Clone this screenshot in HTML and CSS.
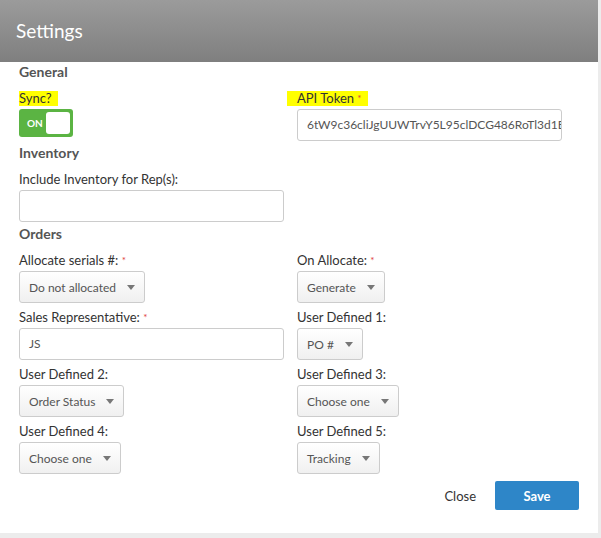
FILE: index.html
```html
<!DOCTYPE html>
<html lang="en">
<head>
    <meta charset="UTF-8">
    <meta name="viewport" content="width=device-width, initial-scale=1.0">
    <title>Settings</title>
    <link rel="stylesheet" href="styles.css">
</head>
<body>

    <div class="modal">
        <div class="modal-header">Settings</div>

        <div class="modal-body">
            <h3 class="section first">General</h3>
            <div class="grid">
                <div class="field">
                    <label><span class="mark mark-sync">Sync?</span></label>
                    <div class="toggle">
                        <span class="toggle-text">ON</span>
                        <span class="toggle-knob"></span>
                    </div>
                </div>
                <div class="field">
                    <label><span class="mark mark-api">API Token <span class="req">*</span></span></label>
                    <div class="input">6tW9c36cliJgUUWTrvY5L95clDCG486RoTl3d1E</div>
                </div>
            </div>

            <h3 class="section">Inventory</h3>
            <div class="grid">
                <div class="field">
                    <label>Include Inventory for Rep(s):</label>
                    <div class="input"></div>
                </div>
            </div>

            <h3 class="section">Orders</h3>
            <div class="grid">
                <div class="field">
                    <label>Allocate serials #: <span class="req">*</span></label>
                    <div class="select"><span>Do not allocated</span><svg class="caret" width="8" height="5" viewBox="0 0 8 5"><path d="M0 0H8L4 5Z"/></svg></div>
                </div>
                <div class="field">
                    <label>On Allocate: <span class="req">*</span></label>
                    <div class="select"><span>Generate</span><svg class="caret" width="8" height="5" viewBox="0 0 8 5"><path d="M0 0H8L4 5Z"/></svg></div>
                </div>
                <div class="field">
                    <label>Sales Representative: <span class="req">*</span></label>
                    <div class="input">JS</div>
                </div>
                <div class="field">
                    <label>User Defined 1:</label>
                    <div class="select"><span>PO #</span><svg class="caret" width="8" height="5" viewBox="0 0 8 5"><path d="M0 0H8L4 5Z"/></svg></div>
                </div>
                <div class="field">
                    <label>User Defined 2:</label>
                    <div class="select"><span>Order Status</span><svg class="caret" width="8" height="5" viewBox="0 0 8 5"><path d="M0 0H8L4 5Z"/></svg></div>
                </div>
                <div class="field">
                    <label>User Defined 3:</label>
                    <div class="select"><span>Choose one</span><svg class="caret" width="8" height="5" viewBox="0 0 8 5"><path d="M0 0H8L4 5Z"/></svg></div>
                </div>
                <div class="field">
                    <label>User Defined 4:</label>
                    <div class="select"><span>Choose one</span><svg class="caret" width="8" height="5" viewBox="0 0 8 5"><path d="M0 0H8L4 5Z"/></svg></div>
                </div>
                <div class="field">
                    <label>User Defined 5:</label>
                    <div class="select"><span>Tracking</span><svg class="caret" width="8" height="5" viewBox="0 0 8 5"><path d="M0 0H8L4 5Z"/></svg></div>
                </div>
            </div>
        </div>

        <div class="modal-footer">
            <button class="btn-link">Close</button>
            <button class="btn-save">Save</button>
        </div>
    </div>

</body>
</html>
```

FILE: styles.css
```css
body {
    margin: 0;
    background: #ececec;
    font-family: 'Lato', 'Liberation Sans', sans-serif;
    color: #333;
}

.modal {
    width: 598px;
    background: #fff;
    padding-bottom: 23px;
}

.modal-header {
    height: 62px;
    padding-left: 16px;
    background: linear-gradient(to bottom, #9b9b9b, #7f7f7f);
    color: #fff;
    font-size: 19px;
    line-height: 62px;
}

.modal-body {
    padding: 0 19px;
}

.section {
    margin: 3px 0 10px;
    font-size: 14px;
    line-height: 18px;
    font-weight: 700;
    color: #555;
}

.section.first {
    margin-top: 1px;
}

.grid {
    display: grid;
    grid-template-columns: 265px 265px;
    column-gap: 13px;
    row-gap: 7px;
    align-items: start;
}

.field label {
    display: block;
    font-size: 13px;
    line-height: 15px;
    margin-bottom: 3px;
}

.req {
    color: #e0403c;
    font-size: 10px;
    vertical-align: top;
}

.mark {
    display: inline-block;
    background: #ffff00;
}

.mark-sync {
    padding-right: 6px;
}

.mark-api {
    margin-left: -10px;
    padding: 0 6px 0 10px;
}

.toggle {
    display: flex;
    align-items: center;
    justify-content: space-between;
    width: 54px;
    height: 28px;
    box-sizing: border-box;
    padding: 3px;
    border-radius: 3px;
    background: #5bb443;
}

.toggle-text {
    padding-left: 5px;
    color: #fff;
    font-size: 10px;
    font-weight: 700;
}

.toggle-knob {
    width: 24px;
    height: 22px;
    border-radius: 3px;
    background: #fff;
}

.input {
    height: 32px;
    box-sizing: border-box;
    padding: 0 9px;
    border: 1px solid #ccc;
    border-radius: 3px;
    font-size: 12px;
    line-height: 30px;
    color: #555;
    white-space: nowrap;
    overflow: hidden;
}

.select {
    display: inline-flex;
    align-items: center;
    gap: 11px;
    height: 32px;
    box-sizing: border-box;
    padding: 0 9px;
    border: 1px solid #ccc;
    border-radius: 3px;
    background: linear-gradient(to bottom, #fff, #f0f0f0);
    font-size: 12px;
    color: #555;
}

.caret {
    fill: #777;
}

.modal-footer {
    display: flex;
    justify-content: flex-end;
    align-items: center;
    gap: 19px;
    margin-top: 7px;
    padding-right: 19px;
}

.btn-link {
    border: 0;
    background: none;
    padding: 0;
    font-family: inherit;
    font-size: 13px;
    color: #333;
    cursor: pointer;
}

.btn-save {
    width: 84px;
    height: 29px;
    border: 0;
    border-radius: 2px;
    background: #2e86c8;
    color: #fff;
    font-family: inherit;
    font-size: 13px;
    font-weight: 700;
    cursor: pointer;
}
```
